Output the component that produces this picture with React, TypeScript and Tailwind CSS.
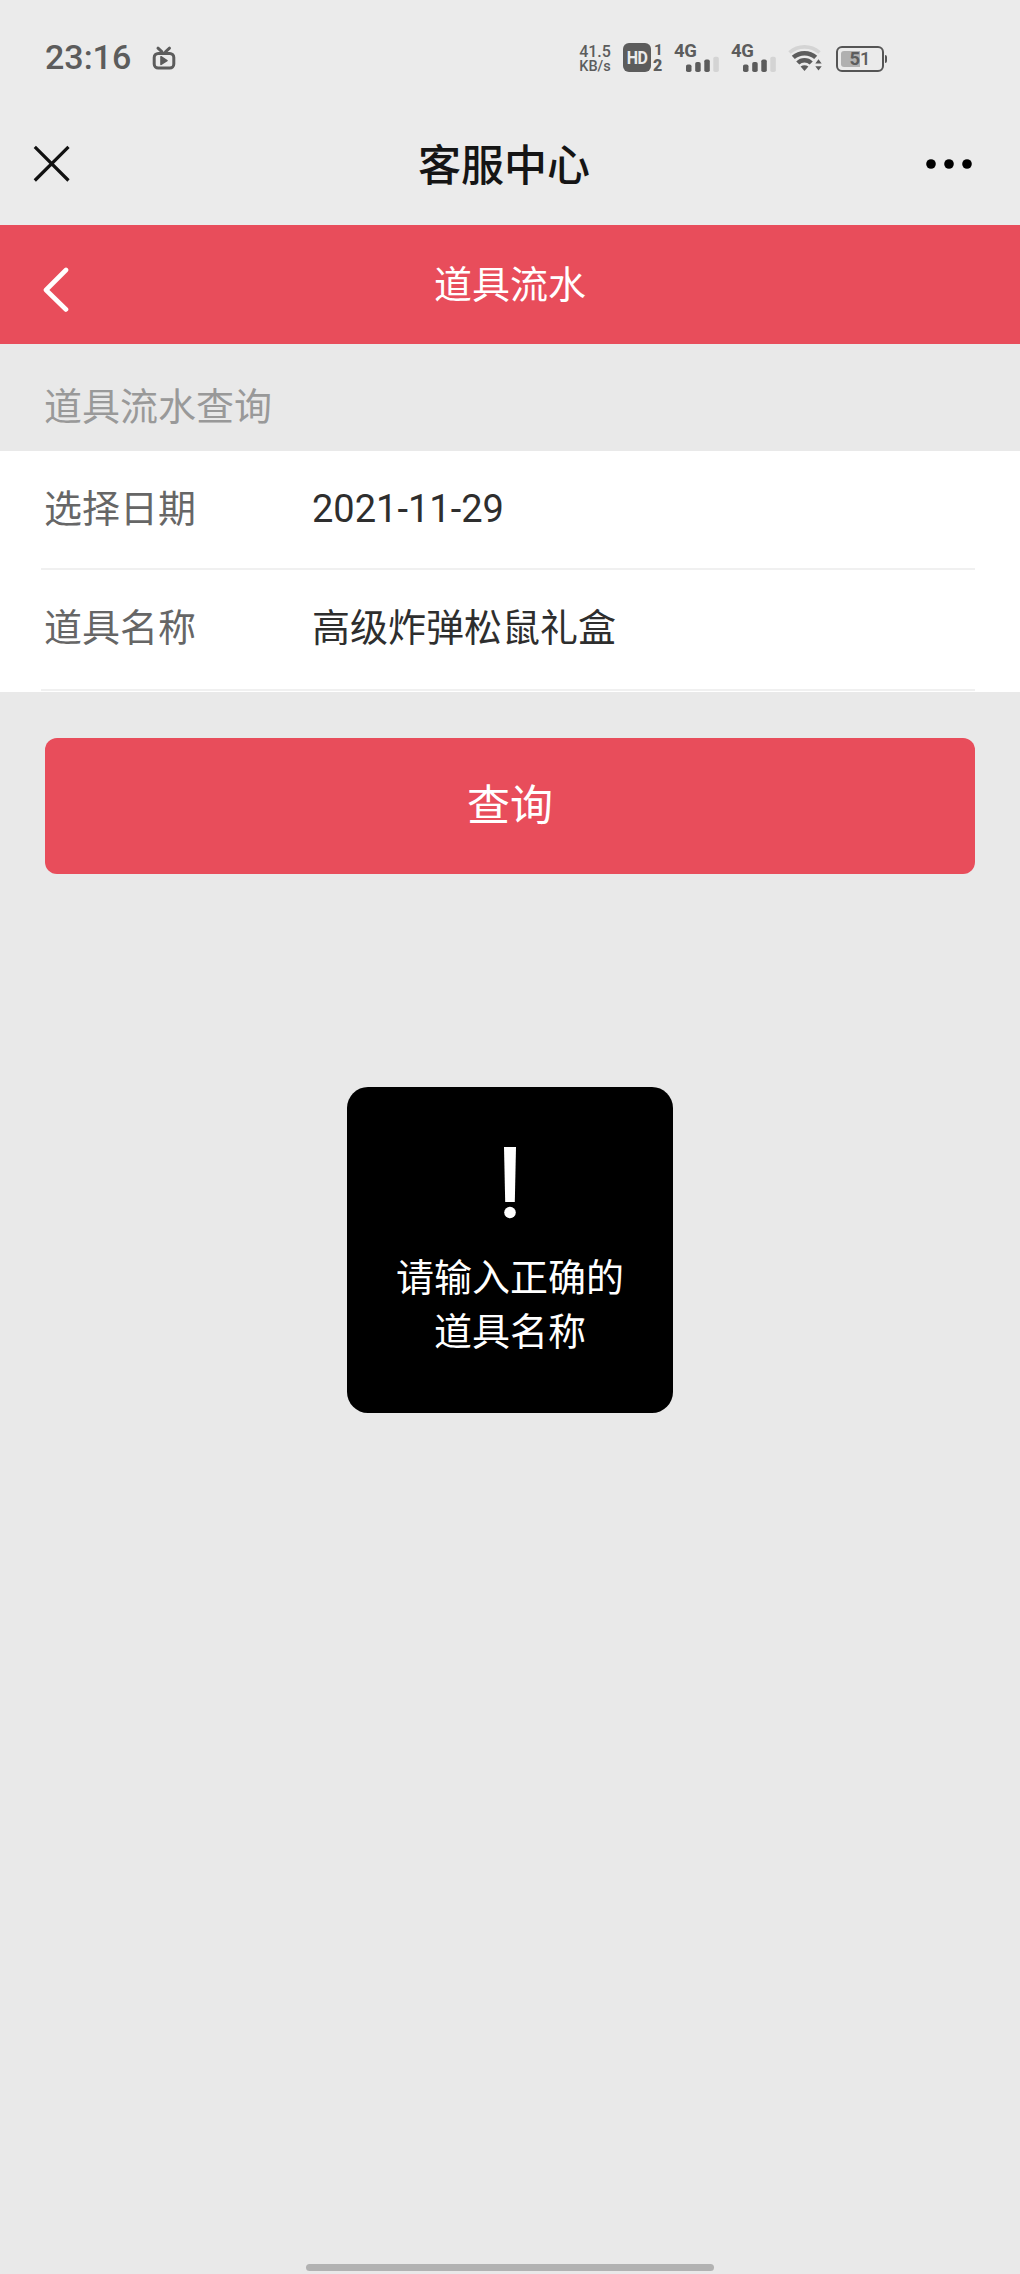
import type React from "react"

interface FieldProps {
  label: string
  children: React.ReactNode
}

function TvIcon() {
  return (
    <svg width="24" height="25" viewBox="0 0 24 25" fill="none" stroke="#5c5c5c" strokeWidth="3" strokeLinecap="round">
      <path d="M6 3.2 10 6.8M17.5 3.2 13.5 6.8" />
      <rect x="2.2" y="8.4" width="19.6" height="14.6" rx="4" />
      <path d="M9 11.8v7.6l6-3.8z" fill="#5c5c5c" strokeWidth="1.6" strokeLinejoin="round" />
    </svg>
  )
}

function Signal() {
  return (
    <div className="relative h-[29px] w-[46px]">
      <span className="absolute top-px left-0 text-[18.5px] leading-[14px] font-bold tracking-[-0.3px]">4G</span>
      <svg className="absolute bottom-0 left-3" width="34" height="16" viewBox="0 0 34 16" fill="#5c5c5c">
        <rect x="0" y="8.4" width="5.5" height="7.6" rx="1.8" />
        <rect x="9.2" y="6" width="5.5" height="10" rx="1.8" />
        <rect x="18.3" y="3.4" width="5.5" height="12.6" rx="1.8" />
        <rect x="27.3" y="0.8" width="5.5" height="15.2" rx="1.8" fill="#d4d4d4" />
      </svg>
    </div>
  )
}

function WifiIcon() {
  return (
    <svg width="36" height="28" viewBox="0 0 36 28" fill="none" stroke="#5c5c5c" strokeWidth="4.5">
      <path d="M1.5 8.5C10 1 23 1 31.5 8.5" stroke="#d4d4d4" strokeWidth="3.6" />
      <path d="M5.3 13.4C11.5 7.8 21.5 7.8 27.7 13.4" />
      <path d="M9.8 19C13.5 15.4 19.5 15.4 23.2 19" />
      <path d="M12.6 22.6Q16.5 19.7 20.4 22.6L16.5 27z" fill="#5c5c5c" stroke="none" />
      <path d="M30.5 15.2 33.7 19.6H27.3zM30.5 26.6 33.7 22.2H27.3z" fill="#5c5c5c" stroke="none" />
    </svg>
  )
}

function Battery() {
  return (
    <div className="flex items-center">
      <div className="relative flex h-[26px] w-12 items-center justify-center rounded-[6px] border-2 border-[#555]">
        <div className="absolute top-[3px] bottom-[3px] left-[3px] w-[19px] rounded-l-[3px] bg-[#b0b0b0]" />
        <span className="relative mt-px text-[18.5px] leading-none font-bold">
          5<span className="font-medium">1</span>
        </span>
      </div>
      <div className="ml-px h-2 w-[2px] rounded-r bg-[#555]" />
    </div>
  )
}

function StatusBar() {
  return (
    <div className="flex h-[116px] items-start pt-[43px] pl-[45px] font-[Roboto,sans-serif] text-[#5c5c5c]">
      <span className="w-[107px] text-[34px] leading-[29px] font-medium">23:16</span>
      <div className="mt-[2px] w-[425px]">
        <TvIcon />
      </div>
      <div className="mt-px w-[46px] text-center text-[16px] leading-[15px] font-medium">
        <div className="w-[36px]">41.5</div>
        <div className="w-[36px] text-[14.5px]">KB/s</div>
      </div>
      <div className="flex h-[29px] w-7 items-center justify-center rounded-[6px] bg-[#5c5c5c] text-[#ebebeb]">
        <span className="scale-y-115 text-[16px] leading-none font-bold tracking-[-0.6px]">HD</span>
      </div>
      <div className="flex w-[23px] flex-col pl-[2px] text-[16px] leading-[14px] font-black">
        <span className="pl-px text-[15.5px] font-bold">1</span>
        <span className="mt-[2px]">2</span>
      </div>
      <div className="flex gap-[11px]">
        <Signal />
        <Signal />
      </div>
      <div className="mt-px ml-[11px] w-[48px]">
        <WifiIcon />
      </div>
      <div className="mt-[3px]">
        <Battery />
      </div>
    </div>
  )
}

function TitleBar() {
  return (
    <div className="grid h-[109px] grid-cols-[100px_1fr_112px] items-start">
      <svg className="mt-[29px] ml-[33px]" width="38" height="38" viewBox="0 0 38 38" fill="none" stroke="#111" strokeWidth="3.2">
        <path d="M1.8 1.8 35.5 35.5M35.5 1.8 1.8 35.5" />
      </svg>
      <h1 className="mt-[20px] text-center text-[43px] leading-[60px] font-medium text-[#151515]">客服中心</h1>
      <svg className="mt-[42px] ml-[16px]" width="50" height="12" viewBox="0 0 50 12" fill="#000">
        <circle cx="7" cy="6" r="4.8" />
        <circle cx="25" cy="6" r="4.8" />
        <circle cx="43" cy="6" r="4.8" />
      </svg>
    </div>
  )
}

function Field({ label, children }: FieldProps) {
  return (
    <div className="flex h-[117px] items-center pl-[3px] text-[38px]">
      <span className="w-[268px] text-[#666]">{label}</span>
      <span className="text-[#2e2e2e]">{children}</span>
    </div>
  )
}

export default function App() {
  return (
    <div className="relative flex h-[2274px] w-[1020px] flex-col bg-[#e9e9e9] font-[Roboto,'Noto_Sans_CJK_SC',sans-serif]">
      <header className="bg-[#ebebeb]">
        <StatusBar />
        <TitleBar />
      </header>

      <div className="grid h-[119px] grid-cols-[100px_1fr_100px] items-start bg-[#e84d5b] text-white">
        <svg className="mt-[42px] ml-[42px]" width="28" height="46" viewBox="0 0 28 46" fill="none" stroke="#fff" strokeWidth="4.6" strokeLinecap="round" strokeLinejoin="round">
          <path d="M24 3 4 23 24 42.5" />
        </svg>
        <h2 className="mt-[32px] text-center text-[38px] leading-[56px]">道具流水</h2>
      </div>

      <main>
        <p className="h-[107px] pt-[35px] pl-11 text-[38px] leading-[56px] text-[#999]">道具流水查询</p>
        <section className="h-[241px] bg-white pr-[45px] pl-[41px]">
          <div className="border-b-2 border-[#f0f0f0]">
            <Field label="选择日期">2021-11-29</Field>
          </div>
          <div className="border-b-2 border-[#f0f0f0] pb-[2px]">
            <Field label="道具名称">高级炸弹松鼠礼盒</Field>
          </div>
        </section>
        <div className="px-[45px] pt-[46px]">
          <button className="block h-[136px] w-full rounded-[12px] bg-[#e84d5b] text-[43px] text-white">查询</button>
        </div>
      </main>

      <div className="absolute top-[1087px] left-[347px] flex size-[326px] flex-col items-center rounded-[21px] bg-black pt-[60px] text-white">
        <svg width="14" height="72" viewBox="0 0 14 72" fill="#fff">
          <path d="M1 0h12l-1.2 55H2.2z" />
          <circle cx="7" cy="65.5" r="5.8" />
        </svg>
        <p className="mt-[32px] text-center text-[38px] leading-[54px]">
          请输入正确的
          <br />
          道具名称
        </p>
      </div>

      <div className="mt-auto mb-[3px] h-[7px] w-[408px] self-center rounded-full bg-[#b2b2b2]" />
    </div>
  )
}
